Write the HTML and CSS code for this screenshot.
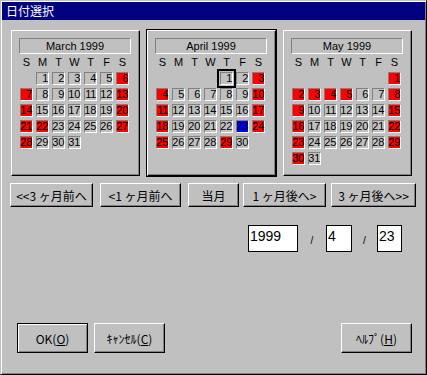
FILE: index.html
```html
<!doctype html>
<html lang="ja">
<head>
<meta charset="utf-8">
<title>日付選択</title>
<link rel="stylesheet" href="styles.css">
</head>
<body>
<div class="window">
  <div class="titlebar">日付選択</div>
  <div class="client">
    <div class="calendars">
      <div class="month">
        <div class="month-title">March 1999</div>
        <div class="weekdays"><span>S</span><span>M</span><span>T</span><span>W</span><span>T</span><span>F</span><span>S</span></div>
        <div class="days">
          <span class="day c2">1</span><span class="day">2</span><span class="day">3</span><span class="day">4</span><span class="day">5</span><span class="day red">6</span>
          <span class="day red">7</span><span class="day">8</span><span class="day">9</span><span class="day">10</span><span class="day">11</span><span class="day">12</span><span class="day red">13</span>
          <span class="day red">14</span><span class="day">15</span><span class="day">16</span><span class="day">17</span><span class="day">18</span><span class="day">19</span><span class="day red">20</span>
          <span class="day red">21</span><span class="day red">22</span><span class="day">23</span><span class="day">24</span><span class="day">25</span><span class="day">26</span><span class="day red">27</span>
          <span class="day red">28</span><span class="day">29</span><span class="day">30</span><span class="day">31</span>
        </div>
      </div>
      <div class="month focus">
        <div class="month-title">April 1999</div>
        <div class="weekdays"><span>S</span><span>M</span><span>T</span><span>W</span><span>T</span><span>F</span><span>S</span></div>
        <div class="days">
          <span class="day c5 current">1</span><span class="day">2</span><span class="day red">3</span>
          <span class="day red">4</span><span class="day">5</span><span class="day">6</span><span class="day">7</span><span class="day">8</span><span class="day">9</span><span class="day red">10</span>
          <span class="day red">11</span><span class="day">12</span><span class="day">13</span><span class="day">14</span><span class="day">15</span><span class="day">16</span><span class="day red">17</span>
          <span class="day red">18</span><span class="day">19</span><span class="day">20</span><span class="day">21</span><span class="day">22</span><span class="day selected">23</span><span class="day red">24</span>
          <span class="day red">25</span><span class="day">26</span><span class="day">27</span><span class="day">28</span><span class="day red">29</span><span class="day">30</span>
        </div>
      </div>
      <div class="month">
        <div class="month-title">May 1999</div>
        <div class="weekdays"><span>S</span><span>M</span><span>T</span><span>W</span><span>T</span><span>F</span><span>S</span></div>
        <div class="days">
          <span class="day c7 red">1</span>
          <span class="day red">2</span><span class="day red">3</span><span class="day red">4</span><span class="day red">5</span><span class="day">6</span><span class="day">7</span><span class="day red">8</span>
          <span class="day red">9</span><span class="day">10</span><span class="day">11</span><span class="day">12</span><span class="day">13</span><span class="day">14</span><span class="day red">15</span>
          <span class="day red">16</span><span class="day">17</span><span class="day">18</span><span class="day">19</span><span class="day">20</span><span class="day">21</span><span class="day red">22</span>
          <span class="day red">23</span><span class="day">24</span><span class="day">25</span><span class="day">26</span><span class="day">27</span><span class="day">28</span><span class="day red">29</span>
          <span class="day red">30</span><span class="day">31</span>
        </div>
      </div>
    </div>

    <div class="nav">
      <button class="btn b-prev3">&lt;&lt;3 ヶ月前へ</button>
      <button class="btn b-prev1">&lt;1 ヶ月前へ</button>
      <button class="btn b-now">当月</button>
      <button class="btn b-next1">1 ヶ月後へ&gt;</button>
      <button class="btn b-next3">3 ヶ月後へ&gt;&gt;</button>
    </div>

    <div class="date-row">
      <div class="field f-year">1999</div>
      <span class="sep s1">/</span>
      <div class="field f-month">4</div>
      <span class="sep s2">/</span>
      <div class="field f-day">23</div>
    </div>

    <div class="actions">
      <button class="btn big default">OK(<u>O</u>)</button>
      <button class="btn big cancel">ｷｬﾝｾﾙ(<u>C</u>)</button>
      <button class="btn big help">ﾍﾙﾌﾟ(<u>H</u>)</button>
    </div>
  </div>
</div>
</body>
</html>
```

FILE: styles.css
```css
* {
  margin: 0;
  padding: 0;
  box-sizing: border-box;
}
body {
  background-color: #c0c0c0;
  font-family: "Liberation Sans", "Noto Sans CJK JP", sans-serif;
  color: #000;
}
.window {
  width: 427px;
  height: 375px;
  background: #c0c0c0;
  border: 1px solid;
  border-color: #c0c0c0 #000 #000 #c0c0c0;
  box-shadow: inset 1px 1px #fff, inset -1px -1px #808080;
  padding: 1px;
  display: flex;
  flex-direction: column;
}
.titlebar {
  height: 18px;
  background: #000080;
  color: #fff;
  font-family: "Noto Sans CJK JP", sans-serif;
  font-size: 12px;
  line-height: 18px;
  padding-left: 4px;
}
.client {
  flex: 1;
  display: flex;
  flex-direction: column;
  padding-bottom: 20px;
}

/* calendars */
.calendars {
  display: flex;
  gap: 7px;
  margin-top: 10px;
  padding-left: 9px;
}
.month {
  width: 129px;
  height: 146px;
  border: 1px solid;
  border-color: #fff #000 #000 #fff;
  box-shadow: inset -1px -1px #808080;
  padding: 7px 0 0 7px;
}
.month.focus {
  outline: 1px solid #000;
}
.month-title {
  width: 112px;
  height: 16px;
  border: 1px solid;
  border-color: #808080 #fff #fff #808080;
  font-size: 11px;
  line-height: 14px;
  text-align: center;
}
.weekdays {
  display: grid;
  grid-template-columns: repeat(7, 13px);
  column-gap: 3px;
  margin: 1px 0 0 1px;
  height: 15px;
  font-size: 11px;
  line-height: 15px;
  text-align: center;
}
.days {
  display: grid;
  grid-template-columns: repeat(7, 13px);
  grid-auto-rows: 13px;
  gap: 3px;
  margin: 2px 0 0 1px;
}
.day {
  display: flex;
  align-items: center;
  justify-content: flex-end;
  border: 1px solid;
  border-color: #808080 #fff #fff #808080;
  font-size: 11px;
  line-height: 11px;
  letter-spacing: -0.3px;
}
.day.red {
  background: #ff0000;
}
.day.selected {
  background: #0000ff;
}
.day.current {
  outline: 2px solid #000;
  outline-offset: 1px;
}
.c2 { grid-column-start: 2; }
.c5 { grid-column-start: 5; }
.c7 { grid-column-start: 7; }

/* buttons */
.btn {
  background: #c0c0c0;
  border: 1px solid;
  border-color: #fff #000 #000 #fff;
  box-shadow: inset -1px -1px #808080;
  font-family: "Noto Sans CJK JP", sans-serif;
  font-size: 12px;
  color: #000;
  height: 24px;
  white-space: nowrap;
}
.nav {
  display: flex;
  margin-top: 7px;
  padding-left: 8px;
}
.b-prev3 { width: 83px; }
.b-prev1 { width: 81px; margin-left: 7px; }
.b-now { width: 51px; margin-left: 7px; }
.b-next1 { width: 83px; margin-left: 4px; }
.b-next3 { width: 85px; margin-left: 5px; }

/* date fields */
.date-row {
  display: flex;
  align-items: center;
  margin-top: 18px;
  padding-left: 246px;
}
.field {
  height: 27px;
  background: #fff;
  border: 1px solid #000;
  font-size: 14px;
  line-height: 16px;
  padding: 2px 1px;
}
.f-year { width: 50px; }
.f-month { width: 26px; }
.f-day { width: 25px; }
.sep {
  font-size: 10px;
  text-align: center;
  padding-top: 4px;
}
.s1 { width: 28px; }
.s2 { width: 25px; }

/* dialog buttons */
.actions {
  display: flex;
  margin-top: auto;
  padding-left: 15px;
}
.btn.big {
  height: 30px;
  width: 71px;
}
.btn.default {
  border-color: #000;
  box-shadow: inset 1px 1px #fff, inset -1px -1px #808080;
}
.cancel { margin-left: 6px; }
.help { margin-left: auto; margin-right: 13px; width: 73px; }
```
